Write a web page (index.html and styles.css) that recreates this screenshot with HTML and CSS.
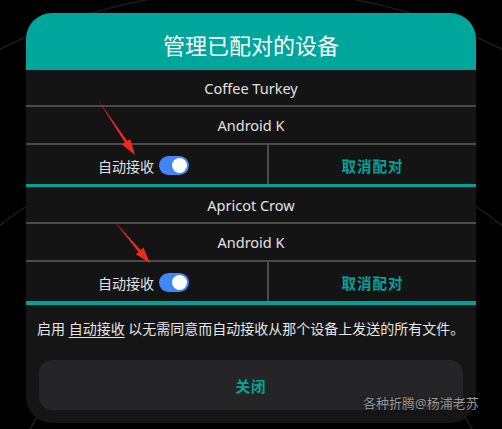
FILE: index.html
```html
<!DOCTYPE html>
<html lang="zh-CN">
<head>
<meta charset="utf-8">
<title>管理已配对的设备</title>
<link rel="stylesheet" href="styles.css">
</head>
<body>
<svg class="backdrop" width="502" height="429" viewBox="0 0 502 429" aria-hidden="true">
  <circle cx="251" cy="552" r="562" fill="none" stroke="#1c1c1c" stroke-width="1.5"/>
  <circle cx="251" cy="552" r="412" fill="none" stroke="#1c1c1c" stroke-width="1.5"/>
  <circle cx="251" cy="552" r="253" fill="none" stroke="#1c1c1c" stroke-width="1.5"/>
</svg>

<div class="dialog">
  <div class="dialog-header">管理已配对的设备</div>

  <div class="device">
    <div class="row name">Coffee Turkey</div>
    <div class="row model">Android K</div>
    <div class="row actions">
      <div class="cell auto">
        <span>自动接收</span>
        <span class="toggle"><span class="knob"></span></span>
      </div>
      <div class="cell unpair">取消配对</div>
    </div>
  </div>

  <div class="device">
    <div class="row name">Apricot Crow</div>
    <div class="row model">Android K</div>
    <div class="row actions">
      <div class="cell auto">
        <span>自动接收</span>
        <span class="toggle"><span class="knob"></span></span>
      </div>
      <div class="cell unpair">取消配对</div>
    </div>
  </div>

  <p class="hint">启用 <u>自动接收</u> 以无需同意而自动接收从那个设备上发送的所有文件。</p>

  <div class="close-btn">关闭</div>
</div>

<svg class="arrows" width="502" height="429" viewBox="0 0 502 429" aria-hidden="true">
  <polygon fill="#ee2a1f" points="98,100 127.3,140.9 130.3,138.9 135,155 121.9,144.5 124.9,142.5"/>
  <polygon fill="#ee2a1f" points="114,221 140.7,249.9 143.4,247.6 150,263 135.8,254.2 138.5,251.9"/>
</svg>

<div class="watermark">各种折腾@杨浦老苏</div>
</body>
</html>
```

FILE: styles.css
```css
html, body {
  margin: 0;
  padding: 0;
}

body {
  background: #000;
  width: 502px;
  height: 429px;
  overflow: hidden;
  position: relative;
  font-family: "Noto Sans", "Noto Sans CJK SC", sans-serif;
  color: #e2e2e2;
  padding-top: 13px;
  box-sizing: border-box;
}

.backdrop, .arrows {
  position: absolute;
  left: 0;
  top: 0;
  pointer-events: none;
}

.backdrop { z-index: 0; }
.arrows { z-index: 3; }

.dialog {
  position: relative;
  z-index: 1;
  margin-left: 26px;
  width: 450px;
  height: 410px;
  background: #151515;
  border-radius: 26px;
  overflow: hidden;
  display: flex;
  flex-direction: column;
}

.dialog-header {
  height: 57px;
  background: #00a69c;
  color: #fff;
  font-size: 22px;
  display: flex;
  align-items: center;
  justify-content: center;
  padding-top: 4px;
  box-sizing: border-box;
}

.device {
  display: flex;
  flex-direction: column;
  background: #141414;
  border-bottom: 3px solid #00a399;
}

.device + .device {
  border-bottom-width: 4px;
}

.row {
  display: flex;
  align-items: center;
  justify-content: center;
  font-size: 14.5px;
}

.name {
  height: 35px;
  border-bottom: 2px solid #4a4a4a;
}

.model {
  height: 36px;
  border-bottom: 2px solid #4a4a4a;
}

.actions {
  height: 39px;
  display: grid;
  grid-template-columns: 243px 1fr;
  align-items: stretch;
}

.cell {
  display: flex;
  align-items: center;
  justify-content: center;
}

.auto {
  gap: 5px;
  font-size: 14px;
  padding-right: 6px;
  border-right: 2px solid #4a4a4a;
  padding-top: 2px;
}

.unpair {
  color: #00a39a;
  font-weight: 700;
  font-size: 14.5px;
  letter-spacing: 1px;
  padding-top: 2px;
}

.toggle {
  width: 30px;
  height: 19px;
  border-radius: 10px;
  background: #4285f4;
  display: flex;
  align-items: center;
  justify-content: flex-end;
  padding-right: 2px;
  box-sizing: border-box;
}

.knob {
  width: 15px;
  height: 15px;
  border-radius: 50%;
  background: #fff;
}

.hint {
  margin: 14px 0 0 11px;
  font-size: 14px;
  line-height: 20px;
  color: #e6e6e6;
}

.hint u {
  text-underline-offset: 3px;
}

.close-btn {
  margin: 21px 13px 0;
  height: 50px;
  border-radius: 13px;
  background: #252527;
  color: #00a39a;
  font-weight: 700;
  font-size: 14.5px;
  display: flex;
  align-items: center;
  justify-content: center;
  letter-spacing: 1px;
}

.watermark {
  position: absolute;
  z-index: 4;
  left: 363px;
  top: 393px;
  font-size: 13px;
  color: #9a9a9a;
  text-shadow: 0 0 2px #000;
  white-space: nowrap;
}
```
